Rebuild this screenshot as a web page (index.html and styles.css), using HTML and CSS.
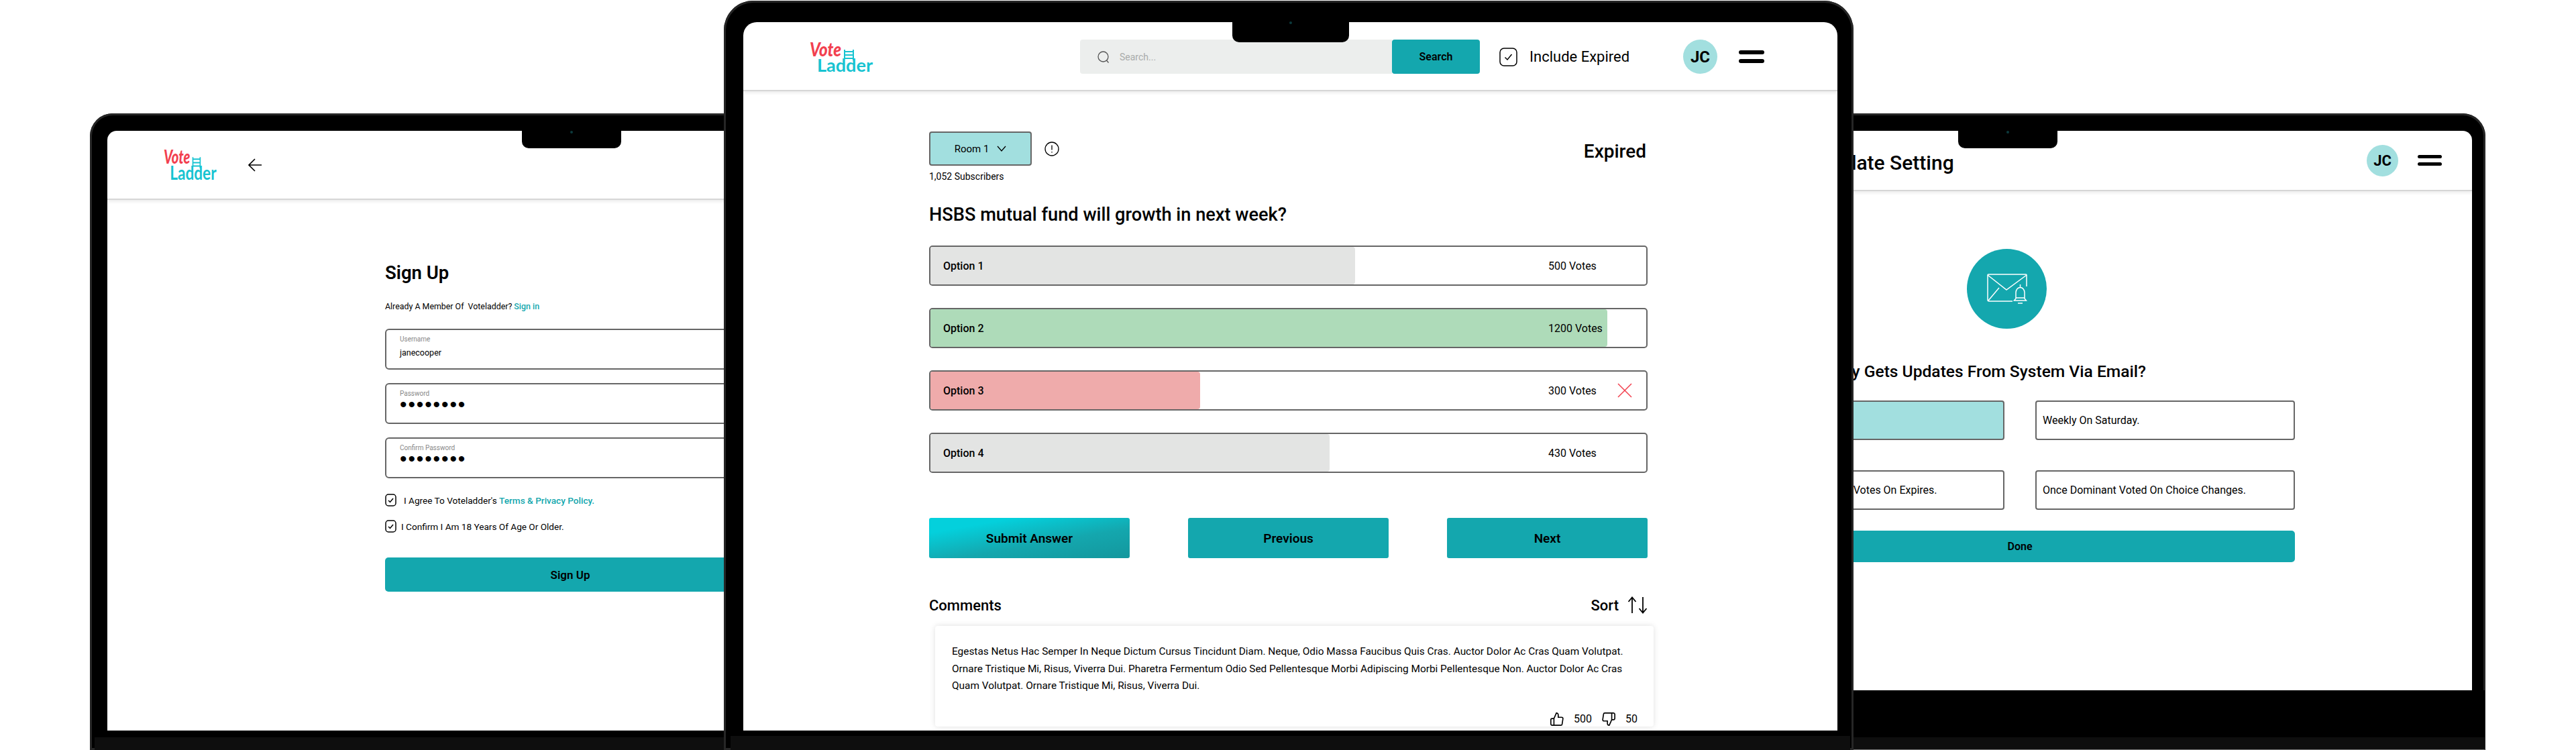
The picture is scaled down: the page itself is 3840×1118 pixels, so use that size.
FILE: index.html
```html
<!DOCTYPE html>
<html lang="en">

<head>
    <meta charset="UTF-8">
    <title>Vote Ladder</title>
    <link rel="stylesheet" href="styles.css">
</head>

<body>
    <div class="stage">

        <!-- sign up laptop -->
        <section class="laptop laptopLeft">
            <div class="notch"><span class="cam"></span></div>
            <div class="screen">
                <header class="bar">
                    <svg class="logo" viewBox="0 0 98 44" preserveAspectRatio="none">
                        <path class="logoRung" d="M52 11v14M65 11v16M52 14h13M52 19h13M52 24h13" />
                        <text class="logoVote" x="0" y="21" textLength="47" lengthAdjust="spacingAndGlyphs">Vote</text>
                        <text class="logoLadder" x="11" y="44" textLength="83" lengthAdjust="spacingAndGlyphs">Ladder</text>
                    </svg>
                    <svg class="backArrow" viewBox="0 0 20 20">
                        <path d="M20 10H1M10 1l-9 9 9 9" />
                    </svg>
                </header>
                <main class="signup">
                    <h1 class="title">Sign Up</h1>
                    <p class="already">Already A Member Of &nbsp;Voteladder? <a class="link">Sign in</a></p>
                    <div class="field">
                        <label>Username</label>
                        <span class="value">janecooper</span>
                    </div>
                    <div class="field">
                        <label>Password</label>
                        <span class="value dots">••••••••</span>
                    </div>
                    <div class="field">
                        <label>Confirm Password</label>
                        <span class="value dots">••••••••</span>
                    </div>
                    <div class="agree">
                        <svg class="tick" viewBox="0 0 17 19">
                            <rect x="1" y="1" width="15" height="17" rx="4" />
                            <path d="M5 10l2.500 2.500L12 7" />
                        </svg>
                        <span class="agreeFirst">I Agree To Voteladder's <a class="link">Terms &amp; Privacy Policy.</a></span>
                    </div>
                    <div class="agree">
                        <svg class="tick" viewBox="0 0 17 19">
                            <rect x="1" y="1" width="15" height="17" rx="4" />
                            <path d="M5 10l2.500 2.500L12 7" />
                        </svg>
                        <span>I Confirm I Am 18 Years Of Age Or Older.</span>
                    </div>
                    <div class="signupBtn">Sign Up</div>
                </main>
            </div>
            <div class="chin"></div>
        </section>

        <!-- email update laptop -->
        <section class="laptop laptopRight">
            <div class="notch"><span class="cam"></span></div>
            <div class="screen">
                <header class="bar barRight">
                    <h2 class="updateTitle">Update Setting</h2>
                    <div class="avatar avatarSmall">JC</div>
                    <div class="menu menuSmall"><span></span><span></span></div>
                </header>
                <main class="update">
                    <div class="mailCircle">
                        <svg viewBox="0 0 60 46">
                            <path d="M38 41H3a2 2 0 0 1-2-2V2a1 1 0 0 1 1-1h56a1 1 0 0 1 1 1v17" />
                            <path d="M1 2l28 22L59 2M2 40l16-19" />
                            <path class="mailBell" d="M43 37V28a6.500 7.500 0 0 1 13 0v9l2.500 3h-18zM49.500 16v4M46 44h7M43 36h13" />
                        </svg>
                    </div>
                    <h3 class="updateAsk">How Frequently Gets Updates From System Via Email?</h3>
                    <div class="freq">
                        <div class="freqItem freqOn">Daily At 9 AM.</div>
                        <div class="freqItem">Weekly On Saturday.</div>
                        <div class="freqItem">Once All Of Your Poll Votes On Expires.</div>
                        <div class="freqItem">Once Dominant Voted On Choice Changes.</div>
                    </div>
                    <div class="doneBtn">Done</div>
                </main>
            </div>
            <div class="chin"></div>
        </section>

        <!-- voting laptop, sits on top of the other two -->
        <section class="laptop laptopMid">
            <div class="notch"><span class="cam"></span></div>
            <div class="screen">
                <header class="bar barMid">
                    <svg class="logo" viewBox="0 0 98 44" preserveAspectRatio="none">
                        <path class="logoRung" d="M52 11v14M65 11v16M52 14h13M52 19h13M52 24h13" />
                        <text class="logoVote" x="0" y="21" textLength="47" lengthAdjust="spacingAndGlyphs">Vote</text>
                        <text class="logoLadder" x="11" y="44" textLength="83" lengthAdjust="spacingAndGlyphs">Ladder</text>
                    </svg>
                    <div class="search">
                        <svg viewBox="0 0 18 18">
                            <circle cx="8.500" cy="8.500" r="7.500" />
                            <path d="M13.500 14l3 3.500" />
                        </svg>
                        <span>Search...</span>
                    </div>
                    <div class="searchBtn">Search</div>
                    <svg class="tick tickBig" viewBox="0 0 27 28">
                        <rect x="1" y="1" width="25" height="26" rx="6" />
                        <path d="M8.500 14.500l3.500 3.500 6.500-8" />
                    </svg>
                    <span class="expiredCheck">Include Expired</span>
                    <div class="avatar">JC</div>
                    <div class="menu"><span></span><span></span></div>
                </header>
                <main class="poll">
                    <div class="roomRow">
                        <div class="room">
                            Room 1
                            <svg viewBox="0 0 14 9">
                                <path d="M1 1l6 7 6-7" />
                            </svg>
                        </div>
                        <svg class="info" viewBox="0 0 22 22">
                            <circle cx="11" cy="11" r="10" />
                            <path d="M11 5.500v7M11 15v1.500" />
                        </svg>
                        <span class="expired">Expired</span>
                    </div>
                    <p class="subs">1,052 Subscribers</p>
                    <h2 class="question">HSBS mutual fund will growth in next week?</h2>

                    <div class="options">
                        <div class="option">
                            <div class="fill" style="width: 59.3%"></div>
                            <div class="optionRow">
                                <span class="optionName">Option 1</span>
                                <span class="votes">500 Votes</span>
                            </div>
                        </div>
                        <div class="option">
                            <div class="fill fillGreen" style="width: 94.6%"></div>
                            <div class="optionRow">
                                <span class="optionName">Option 2</span>
                                <span class="votes">1200 Votes</span>
                            </div>
                        </div>
                        <div class="option">
                            <div class="fill fillRed" style="width: 37.7%"></div>
                            <div class="optionRow">
                                <span class="optionName">Option 3</span>
                                <span class="votes">300 Votes
                                    <svg class="wrong" viewBox="0 0 22 22">
                                        <path d="M1 1l20 20M21 1L1 21" />
                                    </svg>
                                </span>
                            </div>
                        </div>
                        <div class="option">
                            <div class="fill" style="width: 55.8%"></div>
                            <div class="optionRow">
                                <span class="optionName">Option 4</span>
                                <span class="votes">430 Votes</span>
                            </div>
                        </div>
                    </div>

                    <div class="actions">
                        <div class="actionBtn submit">Submit Answer</div>
                        <div class="actionBtn">Previous</div>
                        <div class="actionBtn">Next</div>
                    </div>

                    <div class="commentsHead">
                        <span>Comments</span>
                        <span class="sort">Sort
                            <svg viewBox="0 0 30 26">
                                <path d="M7 25V2M1.500 8L7 1.500 12.500 8M23 1v23M17.500 18l5.500 6.500 5.500-6.500" />
                            </svg>
                        </span>
                    </div>

                    <div class="comment">
                        <p>Egestas Netus Hac Semper In Neque Dictum Cursus Tincidunt Diam. Neque, Odio Massa Faucibus Quis Cras. Auctor Dolor Ac Cras Quam Volutpat.<br>
                        Ornare Tristique Mi, Risus, Viverra Dui. Pharetra Fermentum Odio Sed Pellentesque Morbi Adipiscing Morbi Pellentesque Non. Auctor Dolor Ac Cras<br>
                        Quam Volutpat. Ornare Tristique Mi, Risus, Viverra Dui.</p>
                        <div class="likes">
                            <svg viewBox="0 0 24 24">
                                <path d="M14 9V5a3 3 0 0 0-3-3l-4 9v11h11.280a2 2 0 0 0 2-1.700l1.380-9a2 2 0 0 0-2-2.300zM7 22H4a2 2 0 0 1-2-2v-7a2 2 0 0 1 2-2h3" />
                            </svg>
                            <span class="count">500</span>
                            <svg viewBox="0 0 24 24">
                                <path d="M10 15v4a3 3 0 0 0 3 3l4-9V2H5.720a2 2 0 0 0-2 1.700l-1.380 9a2 2 0 0 0 2 2.300zm7-13h2.670A2.310 2.310 0 0 1 22 4v7a2.310 2.310 0 0 1-2.330 2H17" />
                            </svg>
                            <span class="count">50</span>
                        </div>
                    </div>
                </main>
            </div>
            <div class="chin"></div>
        </section>

    </div>
</body>

</html>
```

FILE: styles.css
```css
* {
    margin: 0px;
    padding: 0px;
    box-sizing: border-box;
}

html,
body {
    width: 100%;
    height: 100%;
    background-color: #fff;
    overflow: hidden;
}

body {
    font-family: "Roboto", "Liberation Sans", sans-serif;
    color: #000;
}

.stage {
    position: relative;
    width: 3840px;
    height: 1118px;
    overflow: hidden;
}

/* laptop frames */
.laptop {
    position: absolute;
    display: flex;
    flex-direction: column;
    background-color: #000;
    box-shadow: inset 0 0 0 3px #262626;
}

.laptopLeft {
    left: 134px;
    top: 169px;
    width: 1432px;
    height: 949px;
    padding: 26px 26px 0;
    border-radius: 34px 34px 0 0;
}

.laptopRight {
    left: 2275px;
    top: 169px;
    width: 1430px;
    height: 949px;
    padding: 26px 20px 0 25px;
    border-radius: 34px 34px 0 0;
}

.laptopMid {
    left: 1079px;
    top: 1px;
    width: 1684px;
    height: 1117px;
    padding: 32px 24px 0 29px;
    border-radius: 44px 44px 0 0;
}

.screen {
    flex: none;
    display: flex;
    flex-direction: column;
    background-color: #fff;
    border-radius: 14px 14px 0 0;
    overflow: hidden;
}

.laptopLeft .screen {
    height: 894px;
}

.laptopRight .screen {
    height: 834px;
}

.laptopMid .screen {
    height: 1056px;
    border-radius: 20px 20px 0 0;
}

.chin {
    flex: 1;
    margin: 0 -19px;
    background: linear-gradient(#000 10px, #0e0e0e 10px);
}

.laptopMid .chin {
    background: linear-gradient(#000 8px, #0e0e0e 8px);
}

.laptopRight .chin {
    background: linear-gradient(#000 70px, #0e0e0e 70px, #0e0e0e 88px, #777 88px);
}

.notch {
    position: absolute;
    display: flex;
    justify-content: center;
    background-color: #000;
    border-radius: 0 0 10px 10px;
}

.laptopLeft .notch,
.laptopRight .notch {
    left: 644px;
    top: 16px;
    width: 148px;
    height: 36px;
    padding-top: 10px;
}

.laptopMid .notch {
    left: 758px;
    top: 22px;
    width: 174px;
    height: 40px;
    padding-top: 9px;
}

.cam {
    width: 4px;
    height: 4px;
    border-radius: 50%;
    background-color: #0c3a3d;
}

/* header bars */
.bar {
    flex: none;
    display: flex;
    align-items: center;
    height: 103px;
    border-bottom: 2px solid #d6d6d6;
    box-shadow: 0 3px 4px rgba(0, 0, 0, 0.07);
    padding-left: 84px;
}

.logo {
    flex: none;
    width: 82px;
    height: 45px;
    overflow: visible;
}

.logoRung {
    fill: none;
    stroke: #17c3d1;
    stroke-width: 2;
}

.logoVote {
    font-family: "Lato", sans-serif;
    font-weight: 900;
    font-style: italic;
    font-size: 28px;
    fill: #f2404f;
}

.logoLadder {
    font-family: "Lato", sans-serif;
    font-weight: 700;
    font-size: 27px;
    fill: #17c3d1;
}

.backArrow {
    flex: none;
    width: 20px;
    height: 20px;
    margin-left: 44px;
    fill: none;
    stroke: #000;
    stroke-width: 1.6;
}

.barMid {
    height: 103px;
    padding-top: 2px;
    padding-left: 99px;
}

.barMid .logo {
    width: 98px;
    height: 44px;
}

.search {
    display: flex;
    align-items: center;
    gap: 15px;
    width: 465px;
    height: 51px;
    margin-left: 305px;
    padding-left: 26px;
    background-color: #eceeed;
    border-radius: 4px 0 0 4px;
    font-size: 14px;
    color: #a9abaa;
}

.search svg {
    width: 18px;
    height: 18px;
    fill: none;
    stroke: #555;
    stroke-width: 1.300;
}

.searchBtn {
    display: flex;
    align-items: center;
    justify-content: center;
    width: 131px;
    height: 51px;
    background-color: #14a7ae;
    border-radius: 4px;
    font-size: 16px;
    font-weight: 600;
}

.tick {
    flex: none;
    width: 17px;
    height: 19px;
    fill: none;
    stroke: #000;
    stroke-width: 1.500;
}

.tickBig {
    width: 27px;
    height: 28px;
    margin-left: 29px;
}

.expiredCheck {
    margin-left: 18px;
    font-size: 22px;
    white-space: nowrap;
}

.avatar {
    flex: none;
    display: flex;
    align-items: center;
    justify-content: center;
    width: 51px;
    height: 51px;
    margin-left: auto;
    background-color: #a2dfdf;
    border-radius: 50%;
    font-size: 24px;
    font-weight: 700;
}

.menu {
    flex: none;
    display: flex;
    flex-direction: column;
    gap: 7px;
    width: 38px;
    margin-left: 32px;
    margin-right: 109px;
}

.menu span {
    height: 6px;
    background-color: #000;
    border-radius: 3px;
}

/* voting screen */
.poll {
    width: 1071px;
    margin-left: 277px;
    padding-top: 60px;
}

.roomRow {
    display: flex;
    align-items: center;
}

.room {
    display: flex;
    align-items: center;
    justify-content: center;
    gap: 12px;
    width: 153px;
    height: 51px;
    background-color: #a2dfdf;
    border: 2px solid #666;
    border-radius: 4px;
    font-size: 15px;
}

.room svg {
    width: 14px;
    height: 9px;
    fill: none;
    stroke: #000;
    stroke-width: 1.300;
}

.info {
    width: 22px;
    height: 22px;
    margin-left: 19px;
    fill: none;
    stroke: #000;
    stroke-width: 1.300;
}

.expired {
    margin-left: auto;
    margin-right: 2px;
    padding-top: 7px;
    font-size: 28px;
    font-weight: 500;
}

.subs {
    margin-top: 7px;
    font-size: 14px;
    line-height: 18px;
}

.question {
    margin-top: 30px;
    font-size: 27.200px;
    line-height: 36px;
    font-weight: 500;
    white-space: nowrap;
}

.options {
    display: grid;
    row-gap: 33px;
    margin-top: 28px;
}

.option {
    display: grid;
    height: 60px;
    border: 2px solid #666;
    border-radius: 5px;
    overflow: hidden;
}

.fill {
    grid-area: 1 / 1;
    background-color: #e3e4e3;
    border-radius: 0 4px 4px 0;
}

.fillGreen {
    background-color: #aedbb9;
}

.fillRed {
    background-color: #efabab;
}

.optionRow {
    grid-area: 1 / 1;
    display: flex;
    align-items: center;
    padding-left: 19px;
    font-size: 16px;
}

.optionName {
    font-weight: 500;
}

.votes {
    display: flex;
    align-items: center;
    width: 144px;
    margin-left: auto;
    margin-right: 2px;
    font-size: 16px;
}

.wrong {
    width: 22px;
    height: 22px;
    margin-left: auto;
    margin-right: 19px;
    fill: none;
    stroke: #f2404f;
    stroke-width: 1.500;
}

.actions {
    display: flex;
    justify-content: space-between;
    margin-top: 67px;
}

.actionBtn {
    display: flex;
    align-items: center;
    justify-content: center;
    width: 299px;
    height: 60px;
    background-color: #14a7ae;
    border-radius: 3px;
    font-size: 19px;
    font-weight: 600;
}

.submit {
    background: linear-gradient(170deg, #04d0dc 20%, #14a7ae 60%, #14979d 100%);
}

.commentsHead {
    display: flex;
    align-items: center;
    justify-content: space-between;
    height: 30px;
    margin-top: 55px;
    font-size: 22px;
    font-weight: 500;
}

.sort {
    display: flex;
    align-items: center;
    gap: 13px;
}

.sort svg {
    width: 30px;
    height: 26px;
    fill: none;
    stroke: #000;
    stroke-width: 1.800;
}

.comment {
    width: 1071px;
    margin-top: 16px;
    margin-left: 9px;
    padding: 26px 24px 0 25px;
    background-color: #fff;
    border-radius: 4px;
    box-shadow: 0 0 8px rgba(0, 0, 0, 0.13);
    font-size: 15.400px;
}

.comment p {
    line-height: 25.600px;
    white-space: nowrap;
}

.likes {
    display: flex;
    align-items: center;
    justify-content: flex-end;
    gap: 14px;
    margin-top: 25px;
    font-size: 16px;
}

.likes svg {
    width: 22px;
    height: 22px;
    fill: none;
    stroke: #000;
    stroke-width: 1.800;
}

/* sign up screen */
.signup {
    width: 552px;
    margin-left: 414px;
    padding-top: 91px;
}

.title {
    font-size: 27.500px;
    line-height: 36px;
    font-weight: 600;
}

.already {
    margin-top: 23px;
    font-size: 12.400px;
    line-height: 18px;
}

.link {
    color: #14a7ae;
    font-weight: 500;
}

.field {
    display: flex;
    flex-direction: column;
    height: 61px;
    margin-top: 20px;
    padding: 8px 20px;
    border: 2px solid #666;
    border-radius: 6px;
}

.already + .field {
    margin-top: 24px;
}

.field label {
    font-size: 10px;
    line-height: 12px;
    color: #888;
}

.value {
    margin-top: 5px;
    font-size: 12.500px;
    line-height: 18px;
}

.dots {
    margin-top: 1px;
    font-family: "Liberation Sans", sans-serif;
    font-size: 30px;
    letter-spacing: 1.900px;
}

.agree {
    display: flex;
    align-items: center;
    gap: 7px;
    height: 19px;
    margin-top: 20px;
    font-size: 13.600px;
    white-space: nowrap;
}

.field + .agree {
    margin-top: 23px;
}

.agreeFirst {
    margin-left: 4px;
}

.signupBtn {
    display: flex;
    align-items: center;
    justify-content: center;
    height: 51px;
    margin-top: 37px;
    background-color: #14a7ae;
    border-radius: 5px;
    font-size: 17px;
    font-weight: 600;
}

/* email update screen */
.barRight {
    height: 90px;
    padding-left: 414px;
}

.updateTitle {
    padding-top: 6px;
    font-size: 30px;
    font-weight: 500;
    white-space: nowrap;
}

.avatarSmall {
    width: 47px;
    height: 47px;
    font-size: 22px;
}

.menuSmall {
    gap: 6px;
    width: 36px;
    margin-left: 29px;
    margin-right: 45px;
}

.menuSmall span {
    height: 5px;
}

.update {
    width: 820px;
    margin-left: 301px;
    padding-top: 86px;
}

.mailCircle {
    display: flex;
    align-items: center;
    justify-content: center;
    width: 119px;
    height: 119px;
    margin-left: 331px;
    background-color: #14a7ae;
    border-radius: 50%;
}

.mailCircle svg {
    width: 60px;
    height: 46px;
    fill: none;
    stroke: #fff;
    stroke-width: 1.500;
}

.mailBell {
    fill: #14a7ae;
}

.updateAsk {
    margin-top: 46px;
    font-size: 24.600px;
    line-height: 36px;
    font-weight: 500;
    white-space: nowrap;
}

.freq {
    display: grid;
    grid-template-columns: 387px 387px;
    column-gap: 46px;
    row-gap: 45px;
    margin-top: 25px;
}

.freqItem {
    display: flex;
    align-items: center;
    height: 59px;
    padding-left: 9px;
    border: 2px solid #666;
    border-radius: 4px;
    font-size: 16px;
}

.freqOn {
    background-color: #a2dfdf;
}

.doneBtn {
    display: flex;
    align-items: center;
    justify-content: center;
    height: 47px;
    margin-top: 31px;
    background-color: #14a7ae;
    border-radius: 5px;
    font-size: 16px;
    font-weight: 600;
}
```
